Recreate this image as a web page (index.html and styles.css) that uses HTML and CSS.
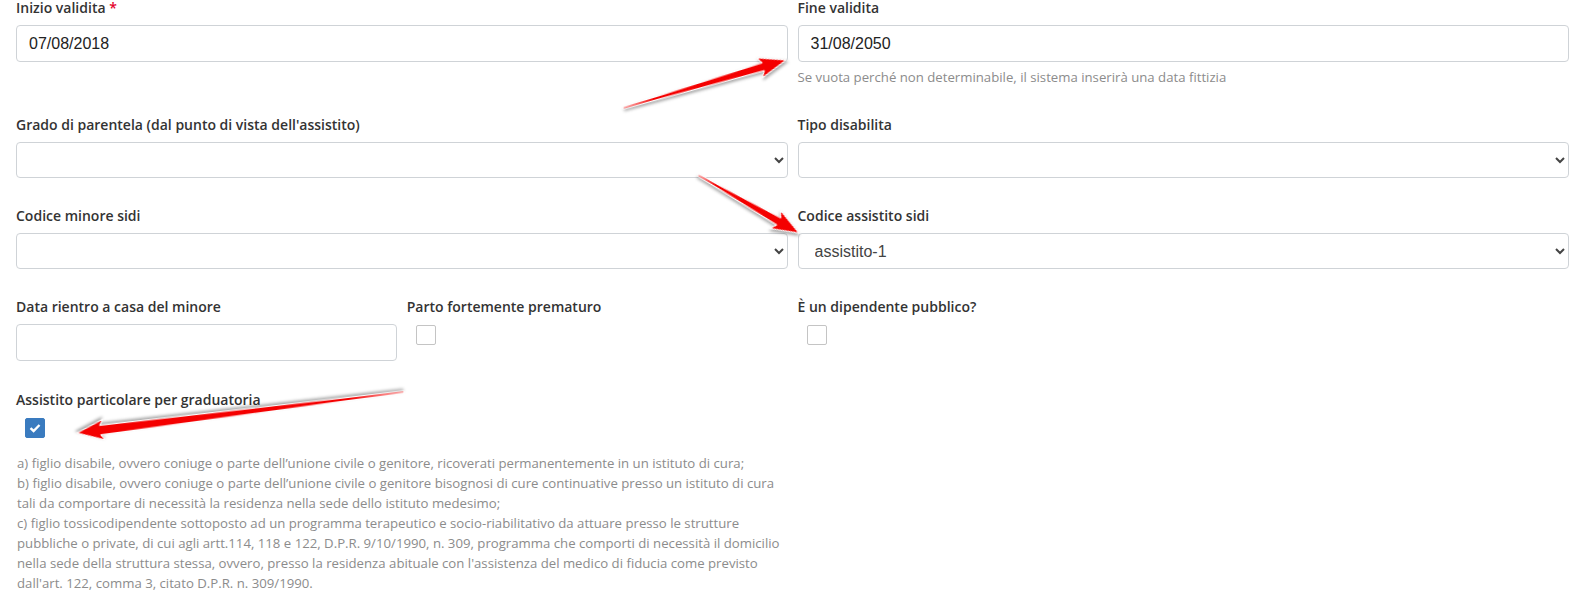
FILE: index.html
```html
<!DOCTYPE html>
<html>
  <head>
    <title>Dati assistito</title>
<link rel="stylesheet" href="styles.css">
  </head>
  <body>
    <form class="form">
      <div class="row two">
        <div class="group">
          <label class="lbl">Inizio validita <span class="req">*</span></label>
          <input class="field" type="text" value="07/08/2018">
        </div>
        <div class="group">
          <label class="lbl">Fine validita</label>
          <input class="field" type="text" value="31/08/2050">
          <p class="help">Se vuota perché non determinabile, il sistema inserirà una data fittizia</p>
        </div>
      </div>

      <div class="row two">
        <div class="group">
          <label class="lbl">Grado di parentela (dal punto di vista dell'assistito)</label>
          <select class="field sel"><option></option></select>
        </div>
        <div class="group">
          <label class="lbl">Tipo disabilita</label>
          <select class="field sel"><option></option></select>
        </div>
      </div>

      <div class="row two">
        <div class="group">
          <label class="lbl">Codice minore sidi</label>
          <select class="field sel"><option></option></select>
        </div>
        <div class="group">
          <label class="lbl">Codice assistito sidi</label>
          <select class="field sel"><option>assistito-1</option></select>
        </div>
      </div>

      <div class="row four">
        <div class="group">
          <label class="lbl">Data rientro a casa del minore</label>
          <input class="field" type="text">
        </div>
        <div class="group">
          <label class="lbl">Parto fortemente prematuro</label>
          <span class="check"></span>
        </div>
        <div class="group">
          <label class="lbl">È un dipendente pubblico?</label>
          <span class="check"></span>
        </div>
        <div class="group"></div>
      </div>

      <div class="row two last">
        <div class="group">
          <label class="lbl">Assistito particolare per graduatoria</label>
          <span class="check on">
            <svg width="12" height="10" viewBox="0 0 12 10"><path d="M1.5 5.2 L4.6 8 L10.5 2" fill="none" stroke="#fff" stroke-width="2.4"/></svg>
          </span>
          <p class="note">
            a) figlio disabile, ovvero coniuge o parte dell’unione civile o genitore, ricoverati permanentemente in un istituto di cura;<br>
            b) figlio disabile, ovvero coniuge o parte dell’unione civile o genitore bisognosi di cure continuative presso un istituto di cura<br>
            tali da comportare di necessità la residenza nella sede dello istituto medesimo;<br>
            c) figlio tossicodipendente sottoposto ad un programma terapeutico e socio-riabilitativo da attuare presso le strutture<br>
            pubbliche o private, di cui agli artt.114, 118 e 122, D.P.R. 9/10/1990, n. 309, programma che comporti di necessità il domicilio<br>
            nella sede della struttura stessa, ovvero, presso la residenza abituale con l'assistenza del medico di fiducia come previsto<br>
            dall'art. 122, comma 3, citato D.P.R. n. 309/1990.
          </p>
        </div>
        <div class="group"></div>
      </div>
    </form>

    <!-- red arrows drawn over the screenshot -->
    <svg class="arrows" width="1584" height="602" viewBox="0 0 1584 602">
      <g transform="translate(623 108) rotate(-16.4)">
        <polygon class="arrow" points="0,-0.8 146,-4.2 142,-10.5 170,0 142,10.5 146,4.2 0,0.8"/>
      </g>
      <g transform="translate(698 175) rotate(29.9)">
        <polygon class="arrow" points="0,-0.8 93,-4.2 89,-10.5 116.5,0 89,10.5 93,4.2 0,0.8"/>
      </g>
      <g transform="translate(404 392) rotate(172.85)">
        <polygon class="arrow" points="0,-0.8 306,-4.8 302,-10.5 329.6,0 302,10.5 306,4.8 0,0.8"/>
      </g>
    </svg>
  </body>
</html>
```
FILE: styles.css
```css
body {
  margin: 0;
  background: #fff;
  font-family: "Open Sans", "Liberation Sans", sans-serif;
  color: #333;
}

.form {
  padding: 0 15px 0 16px;
}

.row {
  display: grid;
  column-gap: 10px;
  margin-bottom: 30px;
}

.two {
  grid-template-columns: 1fr 1fr;
}

.four {
  grid-template-columns: 1fr 1fr 1fr 1fr;
  margin-bottom: 31px;
}

.group {
  display: flex;
  flex-direction: column;
  align-items: flex-start;
}

.lbl {
  display: block;
  font-size: 14px;
  font-weight: 600;
  line-height: 16px;
  margin-bottom: 9px;
  color: #333;
}

.req {
  color: #e4002b;
}

.field {
  box-sizing: border-box;
  width: 100%;
  height: 37px;
  margin: 0;
  padding: 6px 12px;
  font-family: "Liberation Sans", Arial, sans-serif;
  font-size: 16px;
  color: #222;
  background: #fff;
  border: 1px solid #cfd3d7;
  border-radius: 4px;
}

.sel {
  height: 36px;
  color: #444;
}

.help {
  margin: 5px 0 0;
  font-size: 13.2px;
  line-height: 20px;
  color: #8c8c8c;
}

.check {
  display: flex;
  align-items: center;
  justify-content: center;
  box-sizing: border-box;
  width: 20px;
  height: 20px;
  margin: 1px 0 0 9px;
  background: #fff;
  border: 1px solid #c4c4c4;
  border-radius: 2px;
}

.check.on {
  background: #3a7bbf;
  border-color: #3a7bbf;
}

.note {
  margin: 15px 0 0 1px;
  font-size: 13.2px;
  line-height: 20px;
  color: #8c8c8c;
  white-space: nowrap;
}

.arrows {
  position: absolute;
  top: 0;
  left: 0;
  pointer-events: none;
}

.arrow {
  fill: #f40000;
  stroke: #fff;
  stroke-width: 1.2;
  stroke-linejoin: round;
  filter: drop-shadow(1px 2px 1.5px rgba(0, 0, 0, 0.35));
}
```
